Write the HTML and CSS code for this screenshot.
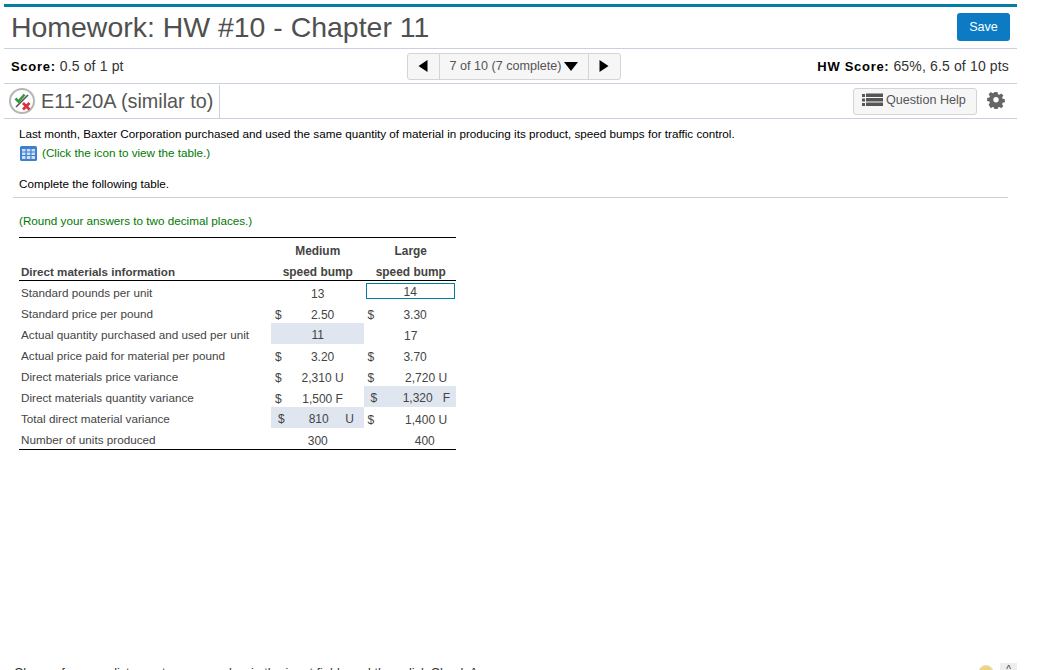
FILE: index.html
```html
<!DOCTYPE html>
<html lang="en">
<head>
<meta charset="utf-8">
<title>Homework</title>
<link rel="stylesheet" href="styles.css">
</head>
<body>
<div class="page">
  <header class="title-bar">
    <h1 class="title">Homework: HW #10 - Chapter 11</h1>
    <button class="save">Save</button>
  </header>
  <div class="score-bar">
    <div class="score"><b>Score:</b> 0.5 of 1 pt</div>
    <nav class="pager">
      <span class="pager-arrow"><svg width="10" height="12" viewBox="0 0 10 12"><path d="M9.5 0v12L0.5 6z"/></svg></span>
      <span class="pager-mid">7 of 10 (7 complete)<svg width="14" height="9" viewBox="0 0 14 9"><path d="M0 0h14L7 9z"/></svg></span>
      <span class="pager-arrow"><svg width="10" height="12" viewBox="0 0 10 12"><path d="M0.5 0v12L9.5 6z"/></svg></span>
    </nav>
    <div class="score score-right"><b>HW Score:</b> 65%, 6.5 of 10 pts</div>
  </div>
  <div class="question-bar">
    <svg class="status" width="26" height="26" viewBox="0 0 26 26">
      <circle cx="13" cy="13" r="12" fill="#fff" stroke="#b5b5b5" stroke-width="2"/>
      <path d="M7 19 19 7" stroke="#555" stroke-width="1.6"/>
      <path d="M6.5 10.5 9.5 13.5 15.5 6.5" fill="none" stroke="#2e9a3c" stroke-width="2.6"/>
      <path d="M14 15l6.500 6.500M20.500 15 14 21.500" stroke="#d8343f" stroke-width="2.800"/>
    </svg>
    <h2 class="qname">E11-20A (similar to)</h2>
    <button class="help">
      <svg width="21" height="14" viewBox="0 0 21 14" fill="#555"><path d="M0 1h3v3H0zM0 5.500h3v3H0zM0 10h3v3H0zM4 0.500h17v3.500H4zM4 5h17v3.500H4zM4 9.500h17v3.500H4z"/></svg>
      Question Help
    </button>
    <svg class="gear" width="18" height="18" viewBox="-1 -1 20 20"><path fill="#666" fill-rule="evenodd" d="M7.300 0h3.400l.5 2.500 1.500.6 2.100-1.400 2.400 2.400-1.400 2.100.6 1.500 2.500.5v3.400l-2.500.5-.6 1.500 1.400 2.100-2.400 2.400-2.100-1.400-1.500.6-.5 2.500H7.300l-.5-2.500-1.500-.6-2.100 1.400L.8 14.200l1.400-2.100-.6-1.500L-.9 10.100V6.700l2.500-.5.6-1.500L.8 2.600 3.200.2l2.100 1.400 1.500-.6zM9 5.800a3 3 0 1 0 0 6 3 3 0 0 0 0-6z"/></svg>
  </div>
  <main class="content">
    <p class="line">Last month, Baxter Corporation purchased and used the same quantity of material in producing its product, speed bumps for traffic control.</p>
    <p class="line note first-note">
      <svg class="grid-icon" width="17" height="15" viewBox="0 0 17 15"><rect width="17" height="15" rx="1.500" fill="#3d7fd1"/><path d="M2 3h3.500v2.500H2zM6.800 3h3.500v2.500H6.800zM11.500 3H15v2.500h-3.500zM2 6.500h3.500V9H2zM6.800 6.500h3.500V9H6.800zM11.500 6.500H15V9h-3.500zM2 10h3.500v3H2zM6.800 10h3.500v3H6.800zM11.500 10H15v3h-3.500z" fill="#cfe0f5"/></svg>
      (Click the icon to view the table.)
    </p>
    <p class="line complete">Complete the following table.</p>
    <hr class="rule">
    <p class="line note round">(Round your answers to two decimal places.)</p>
    <table class="data">
      <colgroup><col class="col-label"><col class="col-num"><col class="col-num"></colgroup>
      <thead>
        <tr><th></th><th>Medium</th><th class="large">Large</th></tr>
        <tr class="head-last"><th class="left">Direct materials information</th><th>speed bump</th><th class="large">speed bump</th></tr>
      </thead>
      <tbody>
        <tr><td class="label">Standard pounds per unit</td><td class="mid">13</td><td class="boxed"><span class="input">14</span></td></tr>
        <tr><td class="label">Standard price per pound</td><td><div class="money"><span>$</span><span class="val">2.50</span></div></td><td><div class="money"><span>$</span><span class="val">3.30</span></div></td></tr>
        <tr><td class="label">Actual quantity purchased and used per unit</td><td class="mid hi">11</td><td class="mid large">17</td></tr>
        <tr><td class="label">Actual price paid for material per pound</td><td><div class="money"><span>$</span><span class="val">3.20</span></div></td><td><div class="money"><span>$</span><span class="val">3.70</span></div></td></tr>
        <tr><td class="label">Direct materials price variance</td><td><div class="money"><span>$</span><span class="val">2,310 U</span></div></td><td><div class="money"><span>$</span><span class="val wide">2,720 U</span></div></td></tr>
        <tr><td class="label">Direct materials quantity variance</td><td><div class="money"><span>$</span><span class="val">1,500 F</span></div></td><td class="hi"><div class="money inset"><span>$</span><span class="val gap-l">1,320</span><span>F</span></div></td></tr>
        <tr><td class="label">Total direct material variance</td><td class="hi"><div class="money inset"><span>$</span><span class="val gap-m">810</span><span class="unit-m">U</span></div></td><td><div class="money"><span>$</span><span class="val wide">1,400 U</span></div></td></tr>
        <tr><td class="label">Number of units produced</td><td class="mid">300</td><td class="mid far">400</td></tr>
      </tbody>
    </table>
  </main>
  <footer class="foot">
    <span class="foot-text">Choose from any list or enter any number in the input fields and then click Check Answer.</span>
    <span class="foot-tools">
      <span class="bulb"></span>
      <span class="up">^</span>
    </span>
  </footer>
</div>
</body>
</html>
```
FILE: styles.css
```css
* { box-sizing: border-box; }
html, body { margin: 0; height: 670px; overflow: hidden; background: #fff; }
body { font-family: "Liberation Sans", Arial, sans-serif; font-size: 11.7px; color: #000; }
.page { width: 1013px; height: 670px; margin-left: 4px; padding-top: 4px; display: flex; flex-direction: column; }

.title-bar { height: 45px; border-top: 3px solid #007fa3; border-bottom: 1px solid #c9d1e0; display: flex; align-items: center; justify-content: space-between; padding: 0 7px; }
.title { margin: 0 0 2px; font-size: 28.45px; font-weight: 400; color: #505050; line-height: 38px; }
.save { width: 53px; height: 28px; margin-bottom: 2px; padding: 0; border: 0; border-radius: 3px; background: #0d7ac4; color: #fff; font: 12.6px "Liberation Sans", Arial, sans-serif; }

.score-bar { height: 35px; border-bottom: 1px solid #c9d1e0; display: grid; grid-template-columns: 1fr auto 1fr; align-items: center; padding: 0 8px 0 7px; }
.score { font-size: 14px; letter-spacing: 0.15px; color: #333; }
.score b { color: #000; letter-spacing: 0.7px; font-size: 13px; }
.score-right { text-align: right; }
.pager { display: flex; height: 27px; margin-left: 7px; border: 1px solid #d4d4d4; border-radius: 3px; background: #f6f6f6; color: #555; font-size: 12.6px; }
.pager-arrow { width: 31px; display: flex; align-items: center; justify-content: center; }
.pager-mid { width: 150px; display: flex; align-items: center; gap: 2px; padding: 0 0 0 10px; border-left: 1px solid #d4d4d4; border-right: 1px solid #d4d4d4; }

.question-bar { height: 35px; border-bottom: 1px solid #c9d1e0; display: flex; align-items: center; padding-left: 5px; }
.status { flex: none; }
.qname { margin: 0 0 0 6px; padding-right: 6px; height: 33px; line-height: 33px; font-size: 19.8px; font-weight: 400; color: #555; border-right: 1px solid #c9d1e0; }
.help { margin-left: auto; width: 124px; height: 27px; display: flex; align-items: center; gap: 3px; padding: 0 0 2px 8px; border: 1px solid #d4d4d4; border-radius: 3px; background: #f6f6f6; color: #555; font: 12.6px "Liberation Sans", Arial, sans-serif; }
.gear { margin: 0 12px 3px 10px; }

.content { flex: 1; padding: 6px 9px 0 15px; }
.line { margin: 0; line-height: 18px; }
.note { color: #007a00; display: flex; align-items: center; gap: 5px; }
.first-note { margin-top: 1px; }
.grid-icon { margin-left: 1px; }
.complete { margin-top: 13px; }
.rule { margin: 4px 0 0 -6px; height: 1px; border: 0; background: #d0d0d8; }
.round { margin-top: 14px; }

.data { margin-top: 7px; width: 437px; table-layout: fixed; border-collapse: collapse; border-top: 1px solid #000; border-bottom: 1px solid #000; color: #444; font-size: 12px; }
.col-label { width: 252px; }
.col-num { width: 92.500px; }
th { height: 21px; padding: 5px 0 0 1px; line-height: 16px; font-weight: 700; text-align: center; color: #444; font-size: 11.9px; }
th.large { padding-left: 2px; }
th.left { text-align: left; padding: 4px 0 0 2px; line-height: 17px; font-size: 11.6px; }
.head-last th { border-bottom: 1px solid #000; }
td { height: 21px; padding: 5px 0 0; line-height: 16px; }
td.label { padding: 3px 0 1px 2px; line-height: 17px; font-size: 11.7px; }
td.mid { padding-left: 1px; text-align: center; }
td.mid.large { padding-left: 2px; }
td.far { padding-left: 30px; }
td.hi { background: #e0e6f0; padding: 3px 0 1px; }
td.mid.hi { padding-left: 1px; }
td.boxed { padding: 2px 1px 3px 2px; text-align: center; }
.input { display: block; height: 16px; line-height: 16px; border: 1px solid #007fa3; }
.money { display: flex; padding-left: 4px; }
.val { flex: 1; text-align: center; }
.val.wide { padding-left: 22px; }
.inset { padding-left: 7px; }
.inset .val { flex: none; width: 50px; }
.inset .gap-m { margin-left: 9px; }
.unit-m { margin-left: 1.5px; }
.inset .gap-l { margin-left: 15.5px; }

.foot { flex: none; height: 8px; line-height: 22px; padding-left: 10px; color: #333; display: flex; justify-content: space-between; overflow: hidden; font-size: 12.7px; }
.foot-tools { display: flex; gap: 6px; }
.bulb { width: 16px; height: 16px; margin-top: 3px; border-radius: 50%; background: #f2d577; border: 1px solid #ddd; }
.up { width: 17px; height: 7px; margin-top: 1px; background: #eee; text-align: center; line-height: 14px; font-size: 10px; }
```
